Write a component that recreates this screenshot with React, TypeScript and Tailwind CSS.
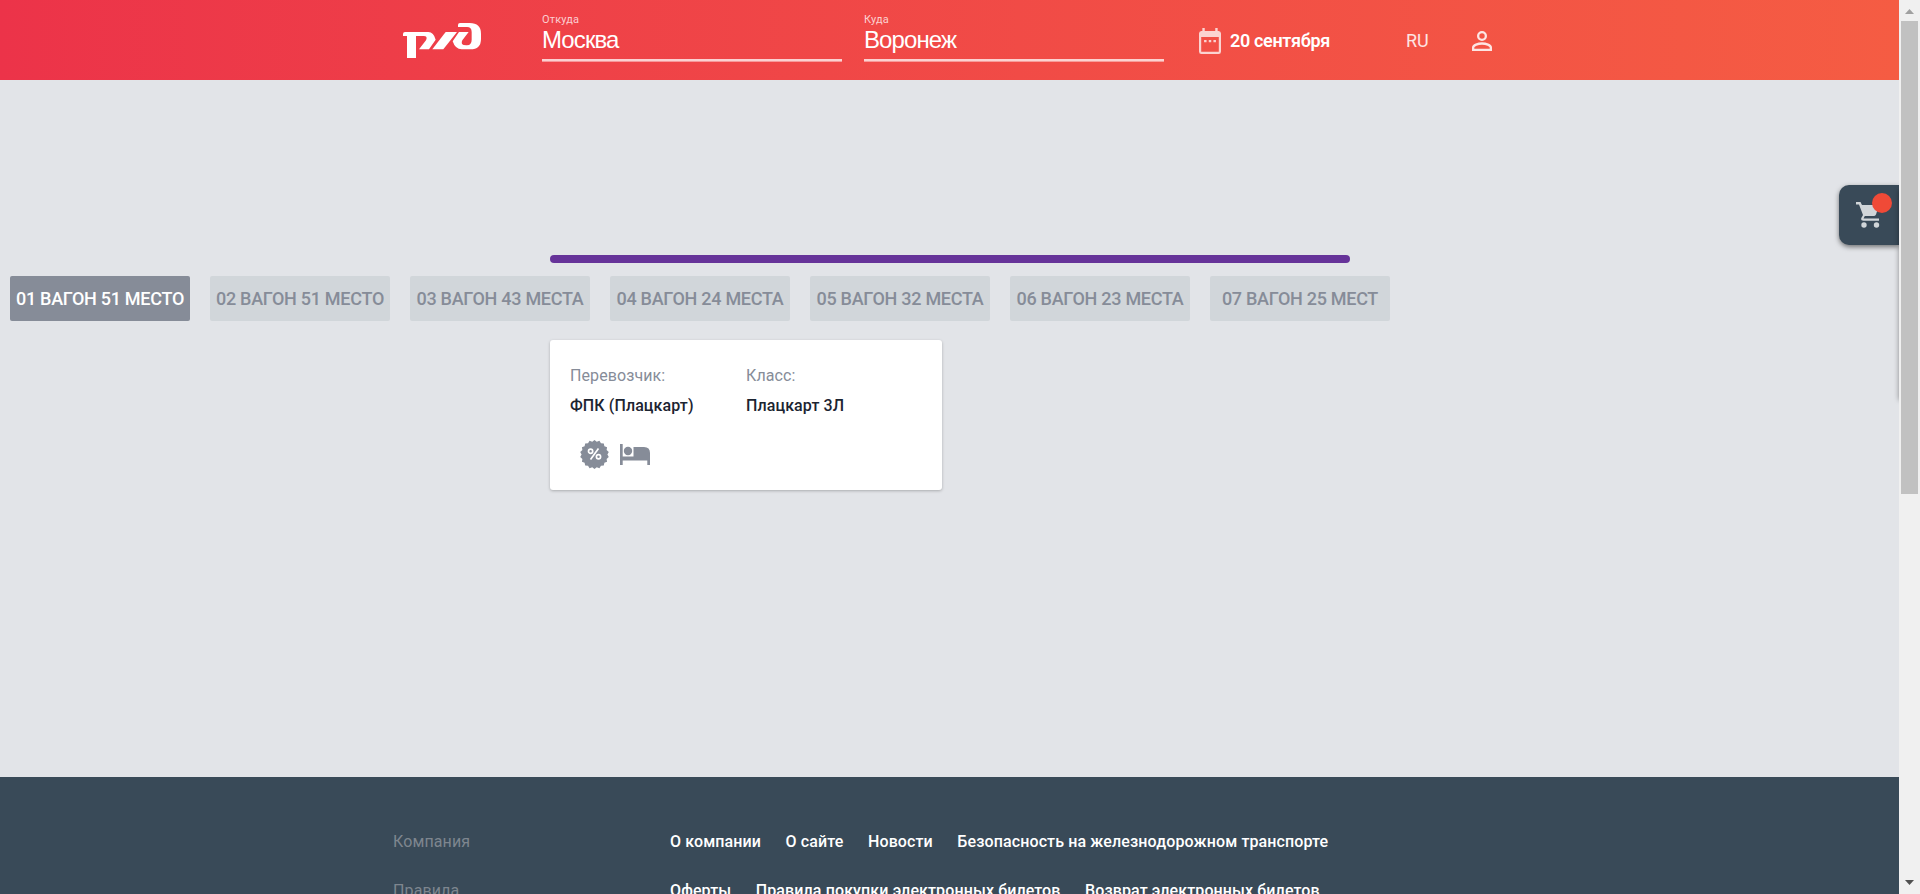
const wagons = [
  '01 ВАГОН 51 МЕСТО',
  '02 ВАГОН 51 МЕСТО',
  '03 ВАГОН 43 МЕСТА',
  '04 ВАГОН 24 МЕСТА',
  '05 ВАГОН 32 МЕСТА',
  '06 ВАГОН 23 МЕСТА',
  '07 ВАГОН 25 МЕСТ',
];

const footerRows = [
  {
    title: 'Компания',
    links: ['О компании', 'О сайте', 'Новости', 'Безопасность на железнодорожном транспорте'],
  },
  {
    title: 'Правила',
    links: ['Оферты', 'Правила покупки электронных билетов', 'Возврат электронных билетов'],
  },
];

function Logo() {
  return (
    <svg className="mt-[23px] ml-[403px] h-[35px] w-[78px] shrink-0" viewBox="0 0 234 105" fill="#fff">
      <path
        fillRule="evenodd"
        d="M0 39V33Q0 27 6 27H76Q92 27 98 50L78 79H48L69 52Q75 39 62 39H39V105H12V39Z"
      />
      <path d="M88 79L128 27H162L121 79Z" />
      <path d="M168 27H197L178 52Q170 67 190 67H192Q206 66 206 50V27Q206 12 192 12H165V6Q165 0 171 0H200Q234 0 234 32V48Q234 79 202 79H176Q157 79 149 55Z" />
    </svg>
  );
}

function Field({ label, value }: { label: string; value: string }) {
  return (
    <div className="flex h-[61px] w-[300px] shrink-0 flex-col border-b-2 border-white/75 pt-[13px] shadow-[0_1px_0_rgba(255,255,255,0.45)]">
      <span className="text-[11px] leading-[13px] tracking-[0.15px] text-white/75">{label}</span>
      <span className="font-['Liberation_Sans',sans-serif] text-[24px] leading-[28px] tracking-[-0.9px] text-white">
        {value}
      </span>
    </div>
  );
}

function CalendarIcon() {
  return (
    <svg
      className="mt-[28px] ml-[35px] h-[26px] w-[22px] shrink-0"
      viewBox="0 0 23 26"
      preserveAspectRatio="none"
      fill="#fff"
      opacity="0.75"
    >
      <path
        fillRule="evenodd"
        d="M3.500 0H6V3H17V0H19.500V3H20.500Q23 3 23 5.500V23.500Q23 26 20.500 26H2.500Q0 26 0 23.500V5.500Q0 3 2.500 3H3.500ZM2.300 9V23.700H20.700V9Z"
      />
      <path d="M5.300 12h2.600v2.300h-2.600zM10.200 12h2.600v2.300h-2.600zM15.100 12h2.600v2.300h-2.600z" />
    </svg>
  );
}

function UserIcon() {
  return (
    <svg
      className="mt-[31px] ml-[42px] h-5 w-5 shrink-0"
      viewBox="0 0 20 20"
      fill="none"
      stroke="#fff"
      strokeWidth="2.3"
      opacity="0.85"
    >
      <circle cx="10" cy="5" r="3.850" />
      <path d="M1.150 18.850V16.500C1.150 14 6 12.500 10 12.500S18.850 14 18.850 16.500V18.850Z" />
    </svg>
  );
}

function PercentIcon() {
  const points = Array.from({ length: 36 }, (_, i) => {
    const r = i % 2 ? 12.9 : 14.5;
    const a = (i * Math.PI) / 18 - Math.PI / 2;
    return `${14.5 + r * Math.cos(a)},${14.5 + r * Math.sin(a)}`;
  }).join(' ');
  return (
    <svg className="h-[29px] w-[29px]" viewBox="0 0 29 29">
      <polygon points={points} fill="#868c98" />
      <g fill="none" stroke="#fff" strokeWidth="1.7">
        <circle cx="10.600" cy="11.200" r="2.100" />
        <circle cx="18.500" cy="16.800" r="2.100" />
        <path d="M18.500 8.500L10.500 19.500" />
      </g>
    </svg>
  );
}

function BedIcon() {
  return (
    <svg className="mt-1 ml-[11px] h-[21px] w-[30px]" viewBox="0 0 30 21" fill="#868c98">
      <path d="M0 0H2.700V12.500H13.500V3H24Q30 3 30 9V21H27.300V16.500H2.700V21H0Z" />
      <circle cx="8" cy="7" r="4.200" />
    </svg>
  );
}

function Cart() {
  return (
    <div className="absolute top-[185px] right-0 h-[60px] w-[60px] rounded-l-[10px] bg-[#394a58] shadow-[0_2px_5px_rgba(0,0,0,0.5)]">
      <svg className="absolute top-[17px] left-[17px] h-[26px] w-[24px]" viewBox="0 0 24 26" fill="#d1d6d9">
        <path d="M0 0H4.500L6 3H23L20 12.500Q19.200 14 17.700 14H8.800L7.500 16.500H23V18.800H7.500Q4.800 18.800 5.200 16.300L7 13L3 2.500H0Z" />
        <circle cx="8" cy="23" r="2.700" />
        <circle cx="20.500" cy="23" r="2.700" />
      </svg>
      <span className="absolute top-2 left-[33px] h-5 w-5 rounded-full bg-[#f04a37]" />
    </div>
  );
}

function Scrollbar() {
  return (
    <div className="flex h-full w-[21px] shrink-0 flex-col items-center bg-[#f0f0f0]">
      <svg className="h-[21px] w-[21px] shrink-0" viewBox="0 0 21 21">
        <path d="M6 14L10.500 9L15 14Z" fill="#a0a0a0" />
      </svg>
      <div className="h-[473px] w-[17px] bg-[#c1c1c1]" />
      <svg className="mt-auto h-[21px] w-[21px] shrink-0" viewBox="0 0 21 21">
        <path d="M6 7L10.500 12L15 7Z" fill="#505050" />
      </svg>
    </div>
  );
}

export default function App() {
  return (
    <div className="flex h-[894px] w-[1920px] overflow-hidden font-[Roboto,sans-serif]">
      <div className="relative flex h-full w-[1899px] flex-col overflow-hidden bg-[#e2e4e8]">
        <header className="flex h-20 shrink-0 items-start bg-linear-to-r from-[#ec3349] to-[#f55c43]">
          <Logo />
          <div className="ml-[61px] flex gap-[22px]">
            <Field label="Откуда" value="Москва" />
            <Field label="Куда" value="Воронеж" />
          </div>
          <CalendarIcon />
          <span className="mt-[30px] ml-[9px] w-[101px] text-[18px] leading-[21px] font-semibold tracking-[-0.33px] whitespace-nowrap text-white">
            20 сентября
          </span>
          <span className="mt-[30px] ml-[75px] w-6 text-[18px] leading-[21px] text-white/85">RU</span>
          <UserIcon />
        </header>

        <main className="flex h-[697px] shrink-0 flex-col pt-[175px]">
          <div className="ml-[550px] h-2 w-[800px] rounded-[4px] bg-[#663399]" />
          <div className="mt-[13px] ml-[10px] flex gap-5">
            {wagons.map((wagon, i) => (
              <div
                key={wagon}
                className={`flex h-[45px] w-[180px] items-center justify-center rounded-[2px] text-[18px] font-medium tracking-[-0.28px] whitespace-nowrap ${
                  i === 0 ? 'bg-[#868c98] text-white' : 'bg-[#d1d6da] text-[#868c98]'
                }`}
              >
                {wagon}
              </div>
            ))}
          </div>
          <section className="mt-[19px] ml-[550px] h-[150px] w-[392px] rounded-[3px] bg-white px-5 pt-[21px] shadow-[0_1px_3px_rgba(0,0,0,0.25)]">
            <div className="flex text-[16px] leading-[30px] tracking-[0.1px]">
              <div className="w-44">
                <div className="text-[#868c98]">Перевозчик:</div>
                <div className="font-medium text-[#1c2431]">ФПК (Плацкарт)</div>
              </div>
              <div>
                <div className="text-[#868c98]">Класс:</div>
                <div className="font-medium text-[#1c2431]">Плацкарт 3Л</div>
              </div>
            </div>
            <div className="mt-[19px] ml-[10px] flex items-start">
              <PercentIcon />
              <BedIcon />
            </div>
          </section>
        </main>

        <footer className="flex h-[117px] shrink-0 flex-col overflow-hidden bg-[#394a58] pt-[40px] pl-[393px] text-[16px] leading-[49px] tracking-[0.12px]">
          {footerRows.map((row) => (
            <div key={row.title} className="flex h-[49px] shrink-0">
              <div className="w-[277px] text-[#7e868f]">{row.title}</div>
              <div className="flex gap-[24.5px] font-medium whitespace-nowrap text-white">
                {row.links.map((link) => (
                  <span key={link}>{link}</span>
                ))}
              </div>
            </div>
          ))}
        </footer>

        <Cart />
        <div className="absolute top-[190px] left-[1899px] h-[210px] w-5 shadow-[0_0_5px_rgba(0,0,0,0.4)]" />
      </div>
      <Scrollbar />
    </div>
  );
}
